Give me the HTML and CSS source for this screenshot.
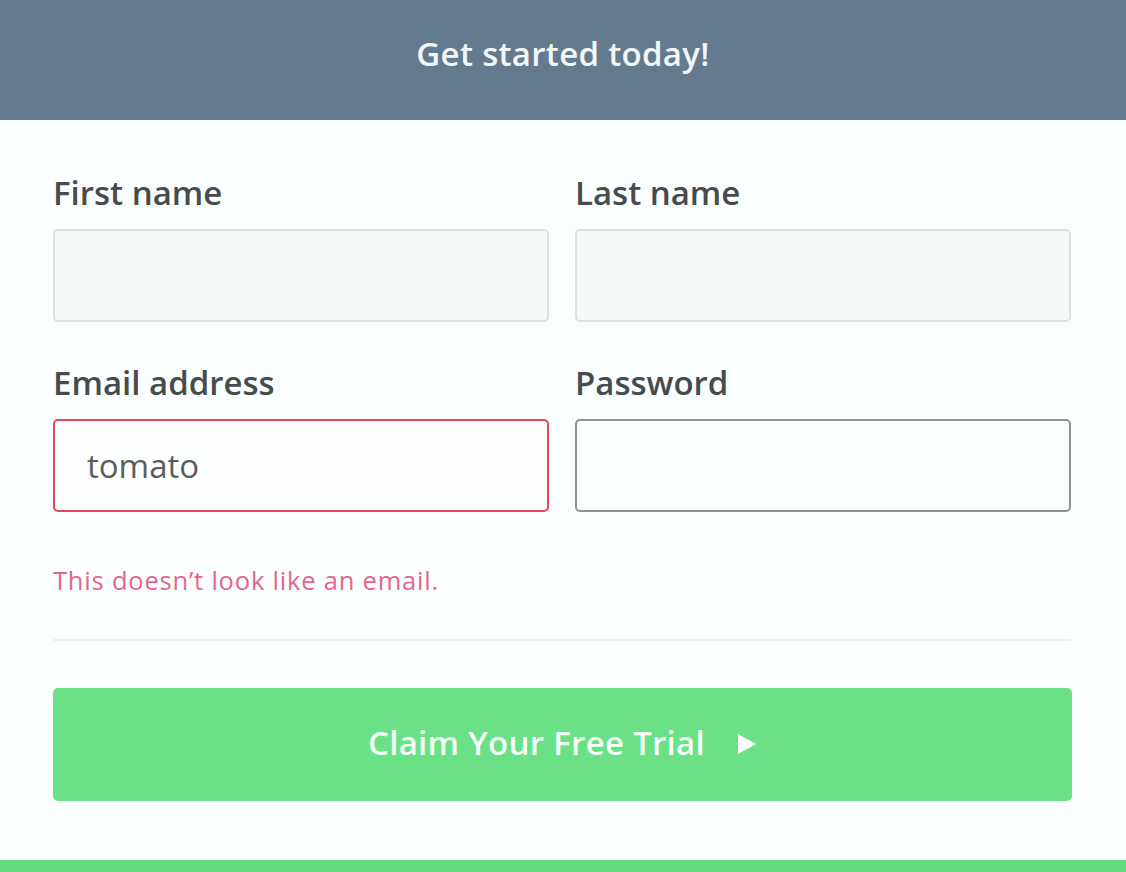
FILE: index.html
```html
<!DOCTYPE html>
<html lang="en">
<head>
<meta charset="utf-8">
<title>Get started today!</title>
<link rel="stylesheet" href="styles.css">
</head>
<body>
<div class="page">
  <header class="hero">
    <h1 class="hero-title">Get started today!</h1>
  </header>
  <form class="signup">
    <div class="grid">
      <div class="field">
        <label class="label">First name</label>
        <div class="input"></div>
      </div>
      <div class="field">
        <label class="label">Last name</label>
        <div class="input"></div>
      </div>
      <div class="field">
        <label class="label">Email address</label>
        <div class="input input-error">tomato</div>
      </div>
      <div class="field">
        <label class="label">Password</label>
        <div class="input input-active"></div>
      </div>
    </div>
    <p class="error">This doesn’t look like an email.</p>
    <hr class="divider">
    <button type="button" class="cta"><span class="cta-text">Claim Your Free Trial</span><span class="arrow"><svg width="20" height="22" viewBox="0 0 20 22"><path d="M1 1 L19 11 L1 21 Z" fill="#fff"/></svg></span></button>
  </form>
  <div class="strip"></div>
</div>
</body>
</html>
```

FILE: styles.css
```css
html, body {
  margin: 0;
  padding: 0;
  background: #f9fcfc;
}
body {
  font-family: "Open Sans", "Noto Sans", "Liberation Sans", sans-serif;
  width: 1126px;
  height: 872px;
  overflow: hidden;
}
.page {
  display: flex;
  flex-direction: column;
  height: 872px;
}
.hero {
  height: 120px;
  background: #647a8e;
  display: flex;
  align-items: center;
  justify-content: center;
  flex-shrink: 0;
}
.hero-title {
  margin: 0;
  color: #f2f6f8;
  font-size: 33px;
  font-weight: 600;
  letter-spacing: 0.3px;
  padding-bottom: 14px;
}
.signup {
  flex: 1;
  padding: 55px 55px 0 53px;
  background: #fbfefe;
}
.grid {
  display: grid;
  grid-template-columns: 1fr 1fr;
  column-gap: 26px;
  row-gap: 43px;
}
.field {
  display: flex;
  flex-direction: column;
}
.label {
  font-size: 33px;
  font-weight: 600;
  color: #474b4c;
  line-height: 36px;
  margin-bottom: 18px;
}
.input {
  height: 93px;
  box-sizing: border-box;
  border: 2px solid #dde0e0;
  border-radius: 5px;
  background: #f5f8f8;
  display: flex;
  align-items: center;
  padding-left: 32px;
  font-size: 33px;
  color: #5a5d5e;
}
.input-error {
  border-color: #e24a5c;
  background: #fdfefe;
}
.input-active {
  border-color: #8e9293;
  background: #fbfefe;
}
.error {
  margin: 52px 0 0;
  font-size: 25.5px;
  line-height: 32px;
  letter-spacing: 0.8px;
  color: #e4668a;
}
.divider {
  border: 0;
  height: 2px;
  background: #eef1ee;
  margin: 43px 0 0;
}
.cta {
  display: flex;
  align-items: center;
  justify-content: center;
  gap: 32px;
  width: calc(100% + 1px);
  height: 113px;
  margin-top: 47px;
  padding: 0 0 4px;
  border: 0;
  border-radius: 5px;
  background: #6ae186;
  color: #f4fff6;
  font-family: inherit;
  font-size: 33px;
  font-weight: 600;
}
.cta-text {
  letter-spacing: 0.3px;
}
.arrow {
  display: flex;
  padding-top: 2px;
}
.strip {
  height: 12px;
  background: #64da7e;
  flex-shrink: 0;
}
```
